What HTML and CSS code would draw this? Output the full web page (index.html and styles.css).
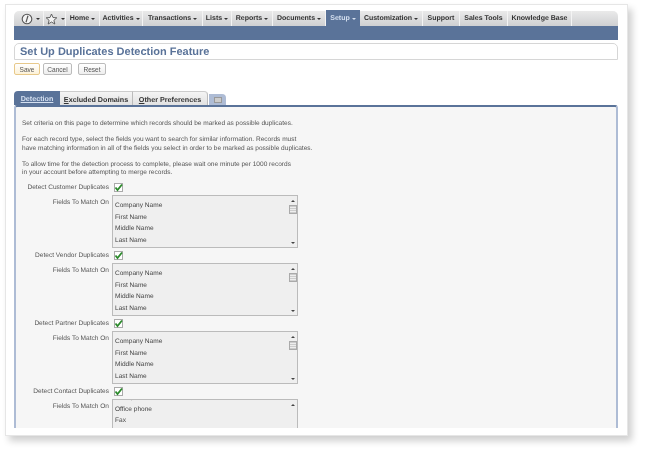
FILE: index.html
```html
<!DOCTYPE html>
<html lang="en">
<head>
    <meta charset="UTF-8">
    <title>Set Up Duplicates Detection Feature</title>
    <link rel="stylesheet" href="styles.css">
</head>
<body>
    <div class="frame">
        <div class="nav">
            <div class="nav-items">
                <div class="nav-item icon-item w-logo">
                    <svg width="12" height="12" viewBox="0 0 12 12"><circle cx="6" cy="6" r="4.8" fill="#f4f4f4" stroke="#555" stroke-width="1.1"/><path d="M7 2.8 5 9.2" stroke="#555" stroke-width="1.2"/></svg>
                    <span class="caret"></span>
                </div>
                <div class="nav-item icon-item w-star">
                    <svg width="13" height="12" viewBox="0 0 13 12"><path d="M6.5 1 8 4.5l3.8.3-2.9 2.5.9 3.7-3.3-2-3.3 2 .9-3.7L1.2 4.8 5 4.500z" fill="#f4f4f4" stroke="#555" stroke-width=".9"/></svg>
                    <span class="caret"></span>
                </div>
                <div class="nav-item w-home">Home<span class="caret"></span></div>
                <div class="nav-item w-activities">Activities<span class="caret"></span></div>
                <div class="nav-item w-transactions">Transactions<span class="caret"></span></div>
                <div class="nav-item w-lists">Lists<span class="caret"></span></div>
                <div class="nav-item w-reports">Reports<span class="caret"></span></div>
                <div class="nav-item w-documents">Documents<span class="caret"></span></div>
                <div class="nav-item active w-setup">Setup<span class="caret"></span></div>
                <div class="nav-item w-custom">Customization<span class="caret"></span></div>
                <div class="nav-item w-support">Support</div>
                <div class="nav-item w-sales">Sales Tools</div>
                <div class="nav-item w-kb">Knowledge Base</div>
            </div>
            <div class="nav-bar"></div>
        </div>

        <div class="title-box">Set Up Duplicates Detection Feature</div>

        <div class="buttons">
            <button class="btn primary w-save">Save</button>
            <button class="btn w-cancel">Cancel</button>
            <button class="btn w-reset">Reset</button>
        </div>

        <div class="tabs">
            <div class="tab active w-tab1"><u>Detection</u></div>
            <div class="tab w-tab2"><u>E</u>xcluded Domains</div>
            <div class="tab last w-tab3"><u>O</u>ther Preferences</div>
            <div class="tab-extra"><span class="tab-square"></span></div>
        </div>

        <div class="panel">
            <p class="intro">Set criteria on this page to determine which records should be marked as possible duplicates.</p>
            <p class="intro">For each record type, select the fields you want to search for similar information. Records must<br>have matching information in all of the fields you select in order to be marked as possible duplicates.</p>
            <p class="intro">To allow time for the detection process to complete, please wait one minute per 1000 records<br>in your account before attempting to merge records.</p>

            <div class="form">
                <div class="label">Detect Customer Duplicates</div>
                <div class="check"><svg width="9" height="9" viewBox="0 0 9 9"><path d="M1.500 4.500 3.500 7 8 1.500" fill="none" stroke="#2c8a2c" stroke-width="1.800"/></svg></div>
                <div class="label field-label">Fields To Match On</div>
                <div class="listbox">
                    <div class="options">
                        <div>Company Name</div><div>First Name</div><div>Middle Name</div><div>Last Name</div>
                    </div>
                    <div class="scroll"><span class="up"></span><span class="thumb"></span><span class="down"></span></div>
                </div>

                <div class="label">Detect Vendor Duplicates</div>
                <div class="check"><svg width="9" height="9" viewBox="0 0 9 9"><path d="M1.500 4.500 3.500 7 8 1.500" fill="none" stroke="#2c8a2c" stroke-width="1.800"/></svg></div>
                <div class="label field-label">Fields To Match On</div>
                <div class="listbox">
                    <div class="options">
                        <div>Company Name</div><div>First Name</div><div>Middle Name</div><div>Last Name</div>
                    </div>
                    <div class="scroll"><span class="up"></span><span class="thumb"></span><span class="down"></span></div>
                </div>

                <div class="label">Detect Partner Duplicates</div>
                <div class="check"><svg width="9" height="9" viewBox="0 0 9 9"><path d="M1.500 4.500 3.500 7 8 1.500" fill="none" stroke="#2c8a2c" stroke-width="1.800"/></svg></div>
                <div class="label field-label">Fields To Match On</div>
                <div class="listbox">
                    <div class="options">
                        <div>Company Name</div><div>First Name</div><div>Middle Name</div><div>Last Name</div>
                    </div>
                    <div class="scroll"><span class="up"></span><span class="thumb"></span><span class="down"></span></div>
                </div>

                <div class="label">Detect Contact Duplicates</div>
                <div class="check"><svg width="9" height="9" viewBox="0 0 9 9"><path d="M1.500 4.500 3.500 7 8 1.500" fill="none" stroke="#2c8a2c" stroke-width="1.800"/></svg></div>
                <div class="label field-label">Fields To Match On</div>
                <div class="listbox scrolled">
                    <div class="options">
                        <div>Main phone</div><div>Office phone</div><div>Fax</div><div>Home phone</div>
                    </div>
                    <div class="scroll"><span class="up"></span></div>
                </div>
            </div>
        </div>
    </div>
</body>
</html>
```

FILE: styles.css
```css
html, body {
    margin: 0;
    height: 452px;
    overflow: hidden;
    background-color: #fff;
}
body {
    font-family: "Liberation Sans", Arial, sans-serif;
    font-size: 6.550px;
    color: #555;
    text-rendering: geometricPrecision;
}
.frame {
    box-sizing: border-box;
    width: 623px;
    height: 432px;
    margin: 4px 0 0 5px;
    padding: 6px 9px 7px 8px;
    border: 1px solid #e6e6e6;
    box-shadow: 4px 5px 7px #cfcfcf;
    overflow: hidden;
    display: flex;
    flex-direction: column;
    filter: blur(0.3px);
}

/* Top menu */
.nav-items {
    display: flex;
    height: 15px;
    border-radius: 5px 5px 0 0;
    background: linear-gradient(#eaeaea, #cfd0d2);
}
.nav-item {
    box-sizing: border-box;
    display: flex;
    align-items: center;
    justify-content: center;
    gap: 2px;
    border-right: 1px solid #f4f4f4;
    font-size: 7px;
    font-weight: bold;
    color: #333;
    white-space: nowrap;
}
.icon-item {
    gap: 3px;
}
.w-logo {
    padding-left: 4px;
}
.nav-item.active {
    background-color: #5a7399;
    color: #d5e0f0;
    margin-top: -1px;
    border-right: 0;
}
.w-logo { width: 30px; }
.w-star { width: 22px; }
.w-home { width: 34px; }
.w-activities { width: 43px; }
.w-transactions { width: 60px; }
.w-lists { width: 29px; }
.w-reports { width: 41px; }
.w-documents { width: 53px; }
.w-setup { width: 34px; }
.w-custom { width: 63px; }
.w-support { width: 37px; }
.w-sales { width: 48px; }
.w-kb { width: 64px; }
.caret {
    width: 0;
    height: 0;
    margin-top: 1px;
    border-left: 2px solid transparent;
    border-right: 2px solid transparent;
    border-top: 2.500px solid currentColor;
}
.nav-bar {
    height: 14px;
    background-color: #5a7399;
}

/* Page title */
.title-box {
    box-sizing: border-box;
    height: 17px;
    margin-top: 3px;
    padding-left: 5px;
    border: 1px solid #d6d6d6;
    border-radius: 5px 5px 0 0;
    font-size: 11px;
    line-height: 16px;
    font-weight: bold;
    color: #5a7399;
}

.buttons {
    display: flex;
    gap: 3px;
    margin-top: 3px;
}
.btn {
    box-sizing: border-box;
    height: 12px;
    padding: 0;
    border: 1px solid #bbb;
    border-radius: 2px;
    background: linear-gradient(#fff, #eee);
    font-family: inherit;
    font-size: 6.550px;
    line-height: 9px;
    color: #555;
}
.btn.primary {
    border-color: #e8c98a;
    background: linear-gradient(#fff, #fdf2d8);
}
.w-save { width: 26px; }
.w-cancel { width: 29px; }
.w-reset {
    width: 28px;
    margin-left: 3px;
}

/* Tabs */
.tabs {
    display: flex;
    align-items: flex-end;
    margin-top: 16px;
    height: 14px;
}
.tab {
    box-sizing: border-box;
    height: 14px;
    padding-top: 3px;
    text-align: center;
    font-size: 7.200px;
    font-weight: bold;
    color: #333;
    background: linear-gradient(#f4f4f4, #e2e2e2);
    border-top: 1px solid #ccc;
    border-right: 1px solid #bbb;
}
.tab.active {
    background-color: #5a7399;
    background-image: none;
    color: #d5e0f0;
    border: 0;
    border-radius: 4px 0 0 0;
}
.tab.last {
    border-radius: 0 4px 0 0;
}
.w-tab1 { width: 46px; }
.w-tab2 { width: 73px; }
.w-tab3 { width: 75px; }
.tab-extra {
    width: 17px;
    height: 11px;
    margin-left: 1px;
    display: flex;
    align-items: center;
    justify-content: center;
    background-color: #aebcd5;
    border-radius: 0 4px 0 0;
}
.tab-square {
    box-sizing: border-box;
    width: 8px;
    height: 6px;
    border: 1px solid #999;
    background-color: #ccc;
}

/* Tab panel */
.panel {
    flex: 1;
    min-height: 0;
    overflow: hidden;
    padding: 13px 8px 0 6px;
    border-top: 2px solid #5a7399;
    border-left: 2px solid #aebcd5;
    border-right: 2px solid #aebcd5;
    border-radius: 3px 3px 0 0;
    background-color: #f6f6f6;
}
.intro {
    margin: 0 0 7.500px 0;
    line-height: 8.500px;
}
.form {
    display: grid;
    grid-template-columns: 87px 186px;
    column-gap: 3px;
    margin-top: -2px;
}
.label {
    text-align: right;
    height: 10px;
    line-height: 10px;
    white-space: nowrap;
}
.field-label {
    padding-top: 3px;
}
.check {
    box-sizing: border-box;
    width: 9px;
    height: 9px;
    margin: 0 0 3px 2px;
    border: 1px solid #aaa;
    background-color: #fff;
    display: flex;
    align-items: center;
    justify-content: center;
}
.check svg {
    flex: none;
}
.listbox {
    box-sizing: border-box;
    display: flex;
    height: 53px;
    margin-bottom: 3px;
    border: 1px solid #bbb;
    background-color: #efefef;
    overflow: hidden;
}
.options {
    flex: 1;
    padding: 4px 0 0 2px;
    line-height: 11.700px;
    color: #444;
}
.scrolled .options {
    margin-top: -12px;
}
.scroll {
    width: 9px;
    display: flex;
    flex-direction: column;
    align-items: center;
}
.up, .down {
    width: 0;
    height: 0;
    border-left: 2px solid transparent;
    border-right: 2px solid transparent;
}
.up {
    margin-top: 4px;
    border-bottom: 2px solid #444;
}
.down {
    margin-top: auto;
    margin-bottom: 3px;
    border-top: 2px solid #444;
}
.thumb {
    box-sizing: border-box;
    width: 8px;
    height: 9px;
    margin-top: 3px;
    border: 1px solid #aaa;
    background: repeating-linear-gradient(#ccc 0 1px, #eee 1px 2px);
}
```
